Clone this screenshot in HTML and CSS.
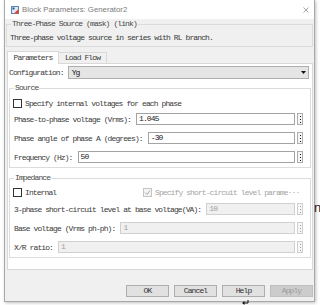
FILE: index.html
```html
<!DOCTYPE html>
<html lang="en">
<head>
    <meta charset="UTF-8" />
    <title>Block Parameters: Generator2</title>
    <link rel="stylesheet" href="styles.css">
</head>
<body>

    <div class="dialog">
        <div class="titlebar">
            <svg class="app-icon" width="8" height="8" viewBox="0 0 8 8">
                <rect x="0.5" y="0.5" width="7" height="7" fill="#dce8f6" stroke="#5b86bd" />
                <rect x="1.5" y="1.5" width="2" height="2" fill="#2f4f7f" />
                <path d="M3 7.5 L7.5 3 L7.5 7.5 Z" fill="#e0452b" />
            </svg>
            <span class="title">Block Parameters: Generator2</span>
            <svg class="close" width="6" height="6" viewBox="0 0 6 6">
                <path d="M0.5 0.5 L5.5 5.5 M5.5 0.5 L0.5 5.5" stroke="#9a9a9a" stroke-width="0.9" />
            </svg>
        </div>

        <fieldset class="group mask">
            <legend>Three-Phase Source (mask) (link)</legend>
            <p class="desc">Three-phase voltage source in series with RL branch.</p>
        </fieldset>

        <div class="tabs">
            <div class="tab active">Parameters</div>
            <div class="tab">Load Flow</div>
        </div>

        <div class="tab-panel">
            <div class="config">
                <span class="label">Configuration:</span>
                <div class="select">
                    <span>Yg</span>
                    <svg width="5" height="3" viewBox="0 0 5 3"><path d="M0 0 H5 L2.5 3 Z" fill="#111" /></svg>
                </div>
            </div>

            <fieldset class="group sub">
                <legend>Source</legend>
                <div class="check-row">
                    <span class="check"><span class="box"></span>Specify internal voltages for each phase</span>
                </div>
                <div class="field first">
                    <span class="label">Phase-to-phase voltage (Vrms):</span>
                    <div class="input">1.045</div>
                    <span class="more"><i></i><i></i><i></i></span>
                </div>
                <div class="field">
                    <span class="label">Phase angle of phase A (degrees):</span>
                    <div class="input">-30</div>
                    <span class="more"><i></i><i></i><i></i></span>
                </div>
                <div class="field">
                    <span class="label">Frequency (Hz):</span>
                    <div class="input">50</div>
                    <span class="more"><i></i><i></i><i></i></span>
                </div>
            </fieldset>

            <fieldset class="group sub impedance">
                <legend>Impedance</legend>
                <div class="check-row">
                    <span class="check left"><span class="box"></span>Internal</span>
                    <span class="check disabled"><span class="box checked">
                        <svg width="7" height="7" viewBox="0 0 7 7"><path d="M1 3.5 L3 5.5 L6 1.5" fill="none" stroke="#a8a8a8" stroke-width="1" /></svg>
                    </span>Specify short-circuit level parame···</span>
                </div>
                <div class="field second">
                    <span class="label">3-phase short-circuit level at base voltage(VA):</span>
                    <div class="input off">10</div>
                    <span class="more off"><i></i><i></i><i></i></span>
                </div>
                <div class="field">
                    <span class="label">Base voltage (Vrms ph-ph):</span>
                    <div class="input off">1</div>
                    <span class="more off"><i></i><i></i><i></i></span>
                </div>
                <div class="field">
                    <span class="label">X/R ratio:</span>
                    <div class="input off">1</div>
                    <span class="more off"><i></i><i></i><i></i></span>
                </div>
            </fieldset>
        </div>

        <div class="buttons">
            <button>OK</button>
            <button>Cancel</button>
            <button>Help</button>
            <button class="off">Apply</button>
        </div>
    </div>

    <span class="stray">n</span>
    <svg class="cursor" width="7" height="5" viewBox="0 0 7 5">
        <path d="M6 0 V3 H1.5" fill="none" stroke="#111" stroke-width="1" />
        <path d="M0 3 L2.5 1 V5 Z" fill="#111" />
    </svg>

</body>
</html>
```

FILE: styles.css
```css
* {
    box-sizing: border-box;
    margin: 0;
    padding: 0
}

body {
    position: relative;
    width: 320px;
    height: 305px;
    overflow: hidden;
    background: #fff;
    font-family: 'Liberation Mono', monospace;
}

.dialog {
    display: flex;
    flex-direction: column;
    width: 311px;
    height: 302px;
    margin-left: 4px;
    background: #f0f0f0;
    border: 1px solid #a9a9a9;
    border-top: none;
    box-shadow: 1px 1px 3px rgba(0, 0, 0, .25);
    font-size: 8px;
    letter-spacing: -0.9px;
    color: #3a3a3a;
}

.titlebar {
    display: flex;
    align-items: center;
    height: 19px;
    padding: 0 5px 0 6px;
    background: #fff;
}

.app-icon {
    margin-right: 3px;
}

.title {
    font-family: 'Liberation Sans', sans-serif;
    font-size: 7.8px;
    letter-spacing: 0;
    color: #7a7a7a;
}

.close {
    margin-left: auto;
}

/* group boxes */

.group {
    border: 1px solid #dcdcdc;
    min-width: 0;
}

    .group legend {
        padding: 0 1px;
        line-height: 10px;
        color: #4a4a4a;
    }

.mask {
    margin: 0 1px;
    padding: 4px 3px 3px;
}

    .mask legend {
        margin-left: 1px;
    }

.desc {
    line-height: 10px;
}

/* tabs */

.tabs {
    display: flex;
    align-items: flex-end;
    margin-top: 4px;
    padding-left: 2px;
}

.tab {
    height: 11px;
    border: 1px solid #d9d9d9;
    border-bottom: none;
    border-left: none;
    line-height: 10px;
    text-align: center;
    width: 48px;
}

    .tab.active {
        position: relative;
        z-index: 1;
        width: 52px;
        height: 13px;
        margin-bottom: -1px;
        border-left: 1px solid #d9d9d9;
        background: #fff;
        line-height: 12px;
    }

.tab-panel {
    height: 207px;
    margin: 0 1px 0 2px;
    background: #fff;
    border: 1px solid #d9d9d9;
}

.config {
    display: flex;
    align-items: center;
    gap: 4px;
    height: 13px;
    margin: 2px 3px 0 0;
    padding-left: 1px;
}

.select {
    flex: 1;
    display: flex;
    align-items: center;
    justify-content: space-between;
    height: 13px;
    padding: 0 2px 0 3px;
    background: #e5e5e5;
    border: 1px solid #adadad;
    color: #111;
}

.sub {
    margin: 4px 1px 0;
    padding: 5px 7px 4px 4px;
}

.impedance {
    margin-top: 5px;
    padding-top: 4px;
}

/* rows */

.check-row {
    display: flex;
    align-items: center;
    height: 10px;
}

.check {
    display: flex;
    align-items: center;
    white-space: nowrap;
}

    .check.left {
        width: 130px;
    }

    .check.disabled {
        color: #a4a4a4;
    }

.box {
    display: flex;
    align-items: center;
    justify-content: center;
    width: 9px;
    height: 9px;
    margin: 0 3px 0 -1px;
    background: #fff;
    border: 1px solid #333;
}

    .box.checked {
        border-color: #c4c4c4;
        background: #f4f4f4;
    }

.field {
    display: flex;
    align-items: center;
    height: 12px;
    margin-top: 7px;
}

    .field.first {
        margin-top: 5px;
    }

    .field.second {
        margin-top: 6px;
    }

    .field .label {
        margin-right: 5px;
        white-space: nowrap;
    }

.input {
    flex: 1;
    height: 12px;
    padding: 0 2px;
    line-height: 10px;
    background: #fff;
    border: 1px solid #a3a3a3;
    color: #222;
}

    .input.off {
        background: #f0f0f0;
        border-color: #d0d0d0;
        color: #a0a0a0;
    }

.more {
    display: flex;
    flex-direction: column;
    align-items: center;
    justify-content: center;
    gap: 2px;
    width: 6px;
    height: 12px;
    margin-left: 2px;
    background: #f7f7f7;
    border: 1px solid #adadad;
}

    .more i {
        width: 1px;
        height: 1px;
        background: #111;
    }

    .more.off {
        border-color: #cfcfcf;
    }

        .more.off i {
            background: #9a9a9a;
        }

/* bottom buttons */

.buttons {
    display: flex;
    justify-content: flex-end;
    gap: 5px;
    margin-top: 15px;
    padding-right: 1px;
}

    .buttons button {
        width: 43px;
        height: 12px;
        background: #e1e1e1;
        border: 1px solid #adadad;
        font: inherit;
        letter-spacing: inherit;
        line-height: 10px;
        color: #333;
    }

        .buttons button.off {
            background: #cccccc;
            border-color: #bfbfbf;
            color: #9c9c9c;
        }

.stray {
    position: absolute;
    left: 314px;
    top: 201px;
    font-family: 'Liberation Sans', sans-serif;
    font-size: 13px;
    line-height: 13px;
    color: #222;
}

.cursor {
    position: absolute;
    left: 242px;
    top: 300px;
}
```
